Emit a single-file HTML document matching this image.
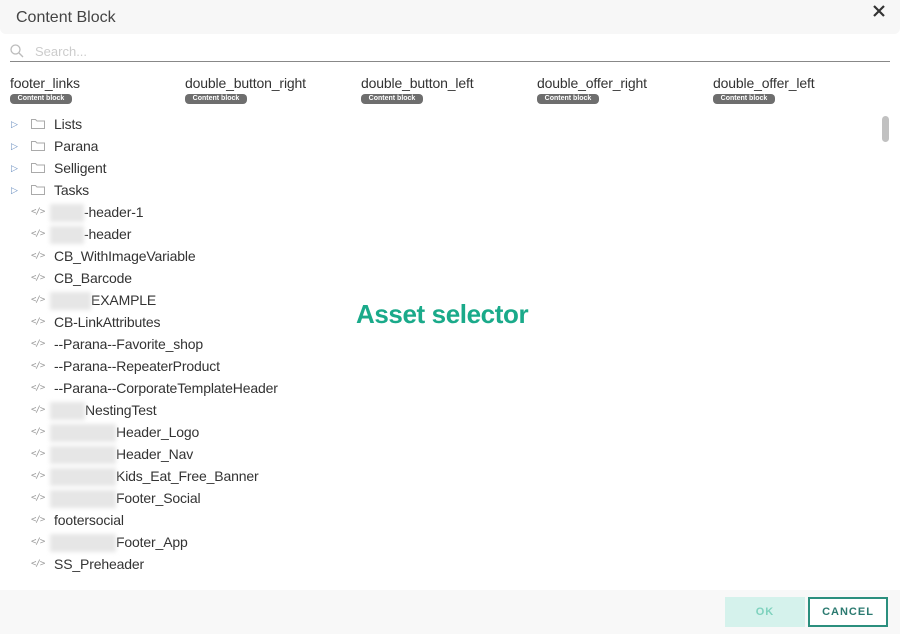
<!DOCTYPE html>
<html><head><meta charset="utf-8"><style>
*{margin:0;padding:0;box-sizing:border-box}
body{width:900px;height:634px;overflow:hidden;background:#fff;font-family:"Liberation Sans",sans-serif;color:#333;position:relative}
.hdr{position:absolute;left:0;top:0;width:900px;height:34px;background:#f7f7f7;border-radius:0 0 6px 6px}
.hdr .t{position:absolute;left:16px;top:9px;font-size:16px;color:#444}
.x{position:absolute;right:14px;top:4px}
.search{position:absolute;left:10px;top:41px;width:880px;height:21px;border-bottom:1px solid #888}
.search span{position:absolute;left:25px;top:3px;font-size:13px;color:#ccc}
.cb{position:absolute;top:75px;font-size:14px;color:#333;letter-spacing:-0.15px}
.cb b{display:block;margin-top:3px;width:62px;height:10px;border-radius:4px;background:#6e6e6e;color:#fff;font-size:7px;line-height:10px;text-align:center;letter-spacing:0}
.row{position:absolute;left:0;height:22px;font-size:14px;line-height:22px;color:#333;white-space:nowrap;letter-spacing:-0.15px}
.row .tx{position:absolute;left:54px}
.bl{display:inline-block;height:18px;vertical-align:middle;background:#e6e6e6;filter:blur(2px);margin-left:-4px}
.ic{position:absolute;left:31px;top:0;font-size:9px;color:#999;font-family:"DejaVu Sans Mono",monospace;letter-spacing:-1px}
.arr{position:absolute;left:11px;top:0;font-size:9px;color:#6a8fc0}
.fold{position:absolute;left:30px;top:4px}
.mid{position:absolute;left:356px;top:299px;font-size:26px;font-weight:bold;color:#1aaa8a;letter-spacing:-0.4px}
.sb{position:absolute;left:882px;top:116px;width:7px;height:26px;background:#c1c1c1;border-radius:4px}
.ftr{position:absolute;left:0;top:590px;width:900px;height:44px;background:#f8f8f8}
.ok{position:absolute;left:725px;top:597px;width:80px;height:30px;background:#d5f2ec;color:#7fd2be;font-size:11px;font-weight:bold;letter-spacing:1px;text-align:center;line-height:30px}
.cancel{position:absolute;left:808px;top:597px;width:80px;height:30px;border:2px solid #2b8f7e;color:#2b7a70;font-size:11px;font-weight:bold;letter-spacing:1px;text-align:center;line-height:26px;background:#fff}
</style></head><body>
<div class="hdr"><div class="t">Content Block</div><svg class="x" width="14" height="14"><path d="M2 2L12 12M12 2L2 12" stroke="#333" stroke-width="2.2"/></svg></div>
<div class="search"><svg width="14" height="14" style="position:absolute;left:0;top:3px"><circle cx="5.5" cy="5.5" r="4.5" fill="none" stroke="#bbb" stroke-width="1.3"/><path d="M9 9l4 4" stroke="#bbb" stroke-width="1.3"/></svg><span>Search...</span></div>
<div class="cb" style="left:10px">footer_links<b>Content block</b></div>
<div class="cb" style="left:185px">double_button_right<b>Content block</b></div>
<div class="cb" style="left:361px">double_button_left<b>Content block</b></div>
<div class="cb" style="left:537px">double_offer_right<b>Content block</b></div>
<div class="cb" style="left:713px">double_offer_left<b>Content block</b></div>

<div class="row" style="top:113px"><span class="arr">▷</span><svg class="fold" width="16" height="13"><path d="M1.5 2.5h4l1.5 1.5h7.5v7.5h-13z" fill="none" stroke="#aaa"/></svg><span class="tx">Lists</span></div>
<div class="row" style="top:135px"><span class="arr">▷</span><svg class="fold" width="16" height="13"><path d="M1.5 2.5h4l1.5 1.5h7.5v7.5h-13z" fill="none" stroke="#aaa"/></svg><span class="tx">Parana</span></div>
<div class="row" style="top:157px"><span class="arr">▷</span><svg class="fold" width="16" height="13"><path d="M1.5 2.5h4l1.5 1.5h7.5v7.5h-13z" fill="none" stroke="#aaa"/></svg><span class="tx">Selligent</span></div>
<div class="row" style="top:179px"><span class="arr">▷</span><svg class="fold" width="16" height="13"><path d="M1.5 2.5h4l1.5 1.5h7.5v7.5h-13z" fill="none" stroke="#aaa"/></svg><span class="tx">Tasks</span></div>
<div class="row" style="top:201px"><span class="ic">&lt;/&gt;</span><span class="tx"><span class="bl" style="width:34px"></span>-header-1</span></div>
<div class="row" style="top:223px"><span class="ic">&lt;/&gt;</span><span class="tx"><span class="bl" style="width:34px"></span>-header</span></div>
<div class="row" style="top:245px"><span class="ic">&lt;/&gt;</span><span class="tx">CB_WithImageVariable</span></div>
<div class="row" style="top:267px"><span class="ic">&lt;/&gt;</span><span class="tx">CB_Barcode</span></div>
<div class="row" style="top:289px"><span class="ic">&lt;/&gt;</span><span class="tx"><span class="bl" style="width:41px"></span>EXAMPLE</span></div>
<div class="row" style="top:311px"><span class="ic">&lt;/&gt;</span><span class="tx">CB-LinkAttributes</span></div>
<div class="row" style="top:333px"><span class="ic">&lt;/&gt;</span><span class="tx">--Parana--Favorite_shop</span></div>
<div class="row" style="top:355px"><span class="ic">&lt;/&gt;</span><span class="tx">--Parana--RepeaterProduct</span></div>
<div class="row" style="top:377px"><span class="ic">&lt;/&gt;</span><span class="tx">--Parana--CorporateTemplateHeader</span></div>
<div class="row" style="top:399px"><span class="ic">&lt;/&gt;</span><span class="tx"><span class="bl" style="width:35px"></span>NestingTest</span></div>
<div class="row" style="top:421px"><span class="ic">&lt;/&gt;</span><span class="tx"><span class="bl" style="width:66px"></span>Header_Logo</span></div>
<div class="row" style="top:443px"><span class="ic">&lt;/&gt;</span><span class="tx"><span class="bl" style="width:66px"></span>Header_Nav</span></div>
<div class="row" style="top:465px"><span class="ic">&lt;/&gt;</span><span class="tx"><span class="bl" style="width:66px"></span>Kids_Eat_Free_Banner</span></div>
<div class="row" style="top:487px"><span class="ic">&lt;/&gt;</span><span class="tx"><span class="bl" style="width:66px"></span>Footer_Social</span></div>
<div class="row" style="top:509px"><span class="ic">&lt;/&gt;</span><span class="tx">footersocial</span></div>
<div class="row" style="top:531px"><span class="ic">&lt;/&gt;</span><span class="tx"><span class="bl" style="width:66px"></span>Footer_App</span></div>
<div class="row" style="top:553px"><span class="ic">&lt;/&gt;</span><span class="tx">SS_Preheader</span></div>

<div class="mid">Asset selector</div>
<div class="sb"></div>
<div class="ftr"></div>
<div class="ok">OK</div>
<div class="cancel">CANCEL</div>
</body></html>
